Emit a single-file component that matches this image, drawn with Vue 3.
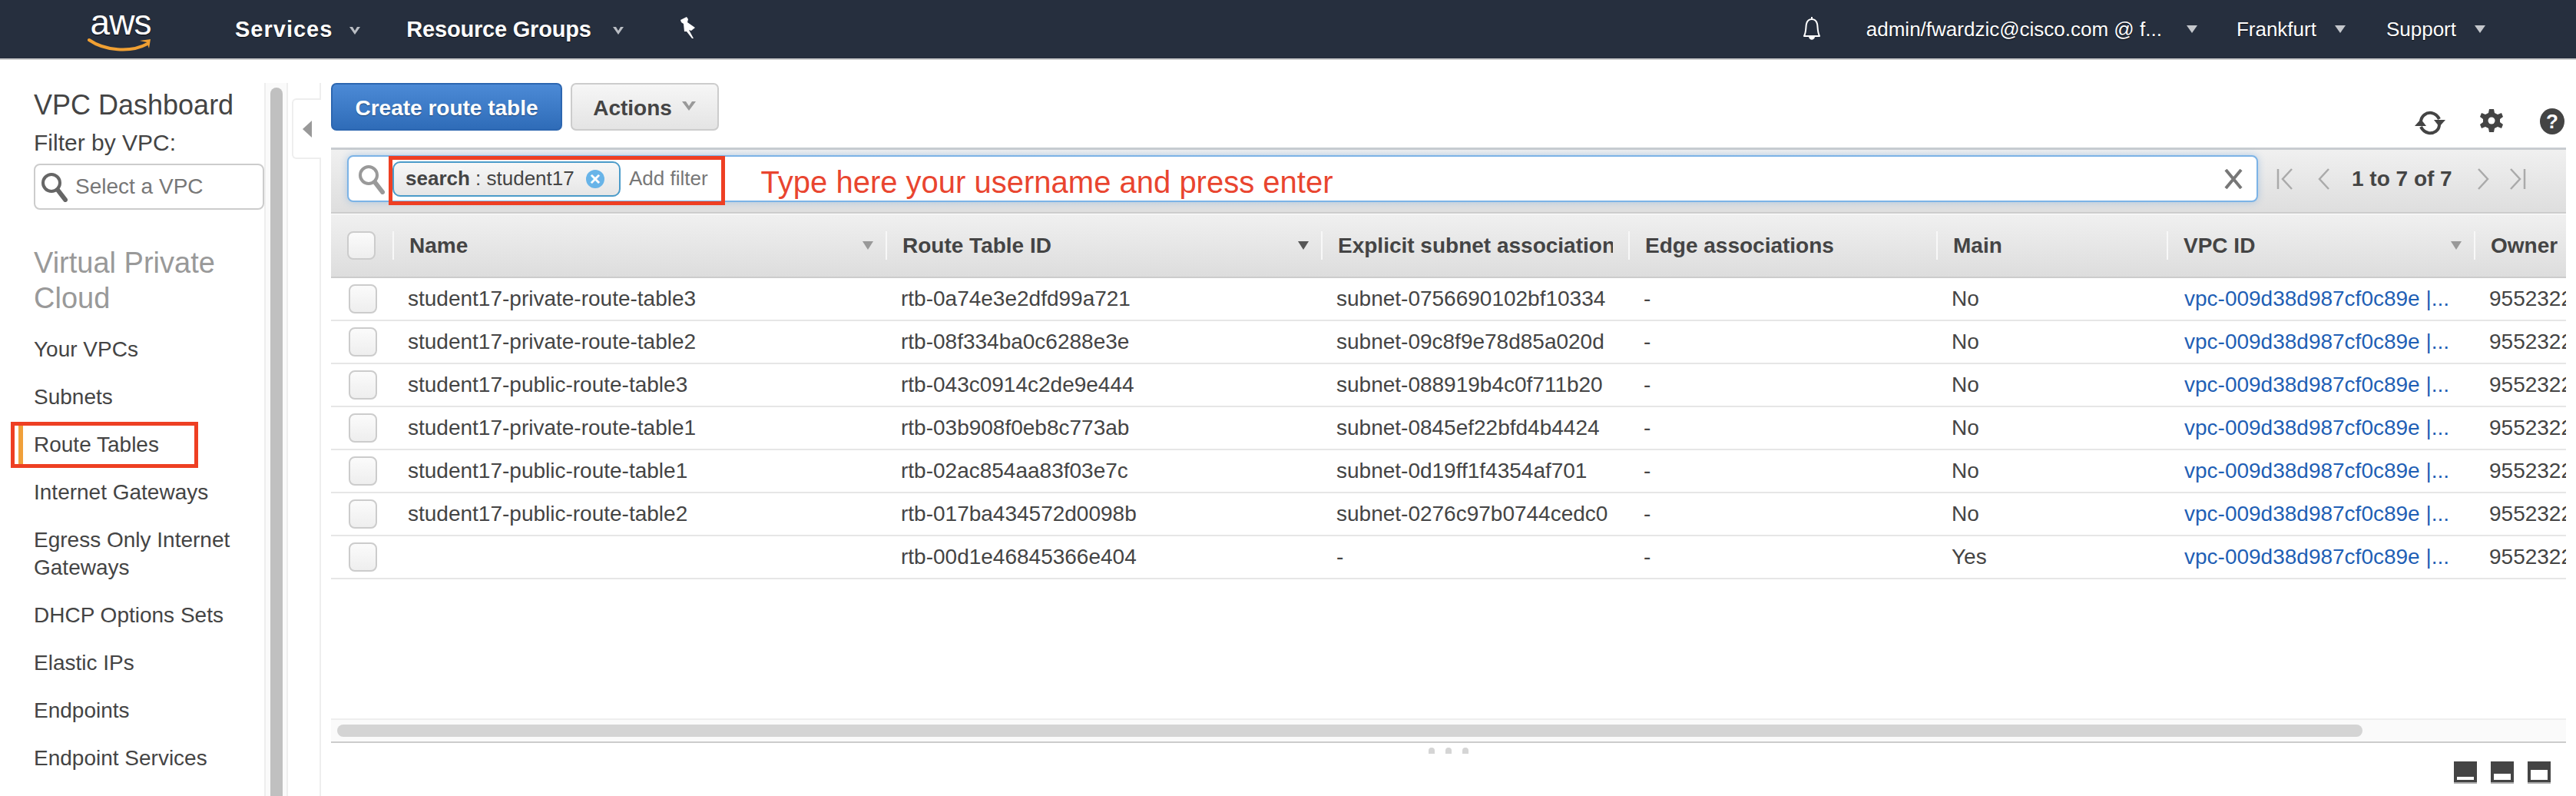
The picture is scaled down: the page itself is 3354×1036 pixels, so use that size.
<template>
  <div class="page">
    <header class="topnav">
      <div class="logo">
        <span class="logo-text">aws</span>
        <svg class="smile" width="86" height="20" viewBox="0 0 86 20">
          <path d="M2 3 C22 17 56 20 78 8" fill="none" stroke="#f0a033" stroke-width="4" stroke-linecap="round" />
          <path d="M68 4 L82 2 L80 14 L77 6 Z" fill="#f0a033" />
        </svg>
      </div>
      <span class="nav-main services">Services</span>
      <svg class="chev chev-first" width="18" height="12" viewBox="0 0 18 12"><path d="M2 1 L9 11 L16 1 L12 1 L9 6 L6 1 Z" fill="#b9bdc3" /></svg>
      <span class="nav-main groups">Resource Groups</span>
      <svg class="chev" width="18" height="12" viewBox="0 0 18 12"><path d="M2 1 L9 11 L16 1 L12 1 L9 6 L6 1 Z" fill="#b9bdc3" /></svg>
      <svg class="pin" width="26" height="30" viewBox="0 0 26 30">
        <path d="M3 5 L11 1 L13 4 L12 8 L22 15 L17 19 L14 18 L20 29 L18 29 L11 20 L8 20 L7 10 L4 8 Z" fill="#fff" />
      </svg>
      <div class="nav-right">
        <svg class="bell" width="32" height="34" viewBox="0 0 32 34">
          <path d="M16 1 L16 4 M6 26 C9 20 8 14 9 10 C10 6 13 4 16 4 C19 4 22 6 23 10 C24 14 23 20 26 26 Z" fill="none" stroke="#fff" stroke-width="2" stroke-linejoin="round" />
          <path d="M12 27 C13 32 19 32 20 27 Z" fill="#fff" />
        </svg>
        <span class="nav-sub user">admin/fwardzic@cisco.com @ f...</span>
        <span class="tri tri-user"></span>
        <span class="nav-sub region">Frankfurt</span>
        <span class="tri"></span>
        <span class="nav-sub support">Support</span>
        <span class="tri"></span>
      </div>
    </header>

    <div class="shell">
      <aside class="sidebar">
        <h2 class="dash">VPC Dashboard</h2>
        <div class="filter-label">Filter by VPC:</div>
        <div class="vpc-select">
          <svg width="36" height="40" viewBox="0 0 36 40">
            <circle cx="15" cy="15" r="11" fill="none" stroke="#666" stroke-width="4" />
            <path d="M23 24 L33 37" stroke="#666" stroke-width="6" stroke-linecap="round" />
          </svg>
          <span>Select a VPC</span>
        </div>
        <div class="section-title">Virtual Private Cloud</div>
        <nav class="side-links">
          <a v-for="item in sideLinks" :key="item" class="side-link">
            {{ item }}
            <template v-if="item === 'Route Tables'">
              <i class="active-bar"></i>
              <i class="side-mark"></i>
            </template>
          </a>
        </nav>
      </aside>

      <div class="side-scroll"><div class="side-thumb"></div></div>
      <div class="gutter">
        <div class="collapse-tab"><span class="collapse-arrow"></span></div>
      </div>

      <main class="content">
        <div class="toolbar">
          <button class="btn btn-primary">Create route table</button>
          <button class="btn btn-plain">
            Actions
            <svg width="20" height="14" viewBox="0 0 20 14"><path d="M1 1 L10 13 L19 1 L14 1 L10 7 L6 1 Z" fill="#999" /></svg>
          </button>
          <div class="tool-icons">
            <svg class="refresh" width="42" height="36" viewBox="0 0 42 36">
              <path d="M9 17 C9 9 16 4 23 5 C28 6 31 9 33 13" fill="none" stroke="#444" stroke-width="4" />
              <path d="M26 14 L41 14 L33 23 Z" fill="#444" />
              <path d="M33 20 C33 28 26 32 19 31 C14 30 11 27 9 23" fill="none" stroke="#444" stroke-width="4" />
              <path d="M1 22 L16 22 L9 13 Z" fill="#444" />
            </svg>
            <svg class="gear" width="32" height="32" viewBox="0 0 32 32">
              <path d="M13 1 H19 L20 6 L24 8 L29 6 L31 11 L27 14 V18 L31 21 L29 26 L24 24 L20 26 L19 31 H13 L12 26 L8 24 L3 26 L1 21 L5 18 V14 L1 11 L3 6 L8 8 L12 6 Z" fill="#444" />
              <circle cx="16" cy="16" r="4.5" fill="#fff" />
            </svg>
            <span class="help">?</span>
          </div>
        </div>

        <div class="filter-bar">
          <div class="search-box">
            <svg class="search-icon" width="36" height="40" viewBox="0 0 36 40">
              <circle cx="15" cy="15" r="11" fill="none" stroke="#999" stroke-width="4" />
              <path d="M23 24 L33 37" stroke="#999" stroke-width="6" stroke-linecap="round" />
            </svg>
            <div class="chip">
              <b>search</b><span class="chip-value">&nbsp;: student17</span>
              <span class="chip-x">×</span>
            </div>
            <span class="add-filter">Add filter</span>
            <span class="hint">Type here your username and press enter</span>
            <span class="clear">
              <svg width="24" height="26" viewBox="0 0 24 26"><path d="M2 1 L22 25 M22 1 L2 25" stroke="#777" stroke-width="4" /></svg>
            </span>
            <i class="filter-mark"></i>
          </div>
          <div class="pager">
            <svg width="24" height="28" viewBox="0 0 24 28"><path d="M2 1 V27 M20 1 L8 14 L20 27" fill="none" stroke="#aaa" stroke-width="2.5" /></svg>
            <svg class="pg-prev" width="16" height="28" viewBox="0 0 16 28"><path d="M14 1 L2 14 L14 27" fill="none" stroke="#aaa" stroke-width="2.5" /></svg>
            <span class="pg-text">1 to 7 of 7</span>
            <svg class="pg-next" width="16" height="28" viewBox="0 0 16 28"><path d="M2 1 L14 14 L2 27" fill="none" stroke="#aaa" stroke-width="2.5" /></svg>
            <svg width="24" height="28" viewBox="0 0 24 28"><path d="M22 1 V27 M4 1 L16 14 L4 27" fill="none" stroke="#aaa" stroke-width="2.5" /></svg>
          </div>
        </div>

        <div class="table-wrap">
          <table class="grid">
            <colgroup>
              <col v-for="w in colWidths" :key="w.id" :style="{ width: w.px + 'px' }" />
            </colgroup>
            <thead>
              <tr>
                <th class="check-cell"><span class="check head-check"></span></th>
                <th v-for="col in columns" :key="col.label">
                  <div class="th-inner">
                    <span class="th-label">{{ col.label }}</span>
                    <span v-if="col.sort" class="sort" :class="col.sort"></span>
                  </div>
                </th>
              </tr>
            </thead>
            <tbody>
              <tr v-for="row in rows" :key="row.id">
                <td class="check-cell"><span class="check"></span></td>
                <td>{{ row.name }}</td>
                <td>{{ row.id }}</td>
                <td>{{ row.subnet }}</td>
                <td>-</td>
                <td>{{ row.main }}</td>
                <td class="link">vpc-009d38d987cf0c89e |...</td>
                <td class="owner">955232244871</td>
              </tr>
            </tbody>
          </table>
        </div>

        <div class="hscroll"><div class="hthumb"></div></div>
        <div class="split-dots"><i></i><i></i><i></i></div>
        <div class="pane-icons">
          <span class="pane small"><i></i></span>
          <span class="pane medium"><i></i></span>
          <span class="pane large"><i></i></span>
        </div>
      </main>
    </div>
  </div>
</template>

<script setup>
const sideLinks = [
  'Your VPCs',
  'Subnets',
  'Route Tables',
  'Internet Gateways',
  'Egress Only Internet Gateways',
  'DHCP Options Sets',
  'Elastic IPs',
  'Endpoints',
  'Endpoint Services',
]

const colWidths = [
  { id: 'check', px: 80 },
  { id: 'name', px: 642 },
  { id: 'rtb', px: 567 },
  { id: 'subnet', px: 400 },
  { id: 'edge', px: 401 },
  { id: 'main', px: 300 },
  { id: 'vpc', px: 400 },
  { id: 'owner', px: 120 },
]

const columns = [
  { label: 'Name', sort: 'light' },
  { label: 'Route Table ID', sort: 'dark' },
  { label: 'Explicit subnet association' },
  { label: 'Edge associations' },
  { label: 'Main' },
  { label: 'VPC ID', sort: 'light' },
  { label: 'Owner' },
]

const rows = [
  { name: 'student17-private-route-table3', id: 'rtb-0a74e3e2dfd99a721', subnet: 'subnet-0756690102bf10334', main: 'No' },
  { name: 'student17-private-route-table2', id: 'rtb-08f334ba0c6288e3e', subnet: 'subnet-09c8f9e78d85a020d', main: 'No' },
  { name: 'student17-public-route-table3', id: 'rtb-043c0914c2de9e444', subnet: 'subnet-088919b4c0f711b20', main: 'No' },
  { name: 'student17-private-route-table1', id: 'rtb-03b908f0eb8c773ab', subnet: 'subnet-0845ef22bfd4b4424', main: 'No' },
  { name: 'student17-public-route-table1', id: 'rtb-02ac854aa83f03e7c', subnet: 'subnet-0d19ff1f4354af701', main: 'No' },
  { name: 'student17-public-route-table2', id: 'rtb-017ba434572d0098b', subnet: 'subnet-0276c97b0744cedc0', main: 'No' },
  { name: '', id: 'rtb-00d1e46845366e404', subnet: '-', main: 'Yes' },
]
</script>

<style>
html, body { margin: 0; background: #fff; overflow: hidden; }
</style>

<style scoped>
.page { width: 3354px; height: 1036px; overflow: hidden; display: flex; flex-direction: column; font-family: "Liberation Sans", Arial, sans-serif; color: #444; background: #fff; }

.topnav { flex: none; height: 76px; border-bottom: 2px solid #ccc; background: #262f3e; display: flex; align-items: center; color: #fff; text-shadow: 0 1px 1px rgba(0,0,0,.7); }
.logo { width: 86px; margin-left: 114px; height: 60px; position: relative; }
.logo-text { display: block; font-size: 46px; line-height: 42px; letter-spacing: -1px; text-align: center; }
.smile { display: block; margin-top: -1px; }
.nav-main { font-size: 29px; font-weight: 700; }
.services { margin-left: 106px; letter-spacing: 1px; }
.groups { margin-left: 58px; letter-spacing: -0.2px; }
.chev { margin-left: 26px; margin-top: 4px; }
.chev-first { margin-left: 20px; }
.pin { margin-left: 69px; margin-top: -4px; }
.nav-right { margin-left: auto; display: flex; align-items: center; padding-right: 118px; }
.bell { margin-right: 55px; }
.nav-sub { font-size: 26px; }
.tri { width: 0; height: 0; border-left: 7px solid transparent; border-right: 7px solid transparent; border-top: 10px solid #c4c7cc; margin-left: 24px; }
.tri-user { margin-left: 32px; }
.region { margin-left: 51px; }
.support { margin-left: 53px; }

.shell { flex: 1; min-height: 0; display: flex; padding-top: 30px; }
.sidebar { width: 344px; flex: none; box-sizing: border-box; padding-left: 44px; overflow: hidden; }
.dash { margin: 6px 0 0; font-size: 36px; font-weight: 400; line-height: 46px; }
.filter-label { font-size: 30px; line-height: 36px; margin-top: 8px; }
.vpc-select { box-sizing: border-box; margin-top: 9px; width: 300px; height: 60px; border: 2px solid #ccc; border-radius: 8px; display: flex; align-items: center; gap: 10px; padding-left: 6px; color: #777; font-size: 28px; }
.section-title { width: 250px; margin-top: 46px; color: #999; font-size: 38px; line-height: 46px; }
.side-links { margin-left: -44px; margin-top: 13px; }
.side-link { display: block; position: relative; padding: 13px 0 13px 44px; font-size: 28px; line-height: 36px; color: #444; width: 260px; }
.active-bar { position: absolute; left: 24px; top: 6px; width: 6px; height: 50px; background: #f0a03a; }
.side-mark { position: absolute; left: 14px; top: 1px; width: 244px; height: 60px; box-sizing: border-box; border: 5px solid #ee3f23; }

.side-scroll { width: 27px; flex: none; border-left: 2px solid #eee; border-right: 2px solid #eee; background: #fafafa; position: relative; }
.side-thumb { position: absolute; left: 6px; top: 6px; width: 16px; bottom: 0; border-radius: 8px 8px 0 0; background: #c0c0c0; }
.gutter { width: 41px; flex: none; border-right: 2px solid #eee; position: relative; }
.collapse-tab { position: absolute; left: 5px; top: 20px; width: 38px; height: 79px; box-sizing: border-box; background: #fff; border: 2px solid #eee; border-right: none; border-radius: 6px 0 0 6px; display: flex; align-items: center; padding-left: 12px; }
.collapse-arrow { width: 0; height: 0; border-top: 11px solid transparent; border-bottom: 11px solid transparent; border-right: 12px solid #999; }

.content { margin-left: 13px; width: 2910px; flex: none; display: flex; flex-direction: column; }
.toolbar { height: 84px; display: flex; align-items: flex-start; gap: 11px; }
.btn { height: 62px; font-family: inherit; font-size: 28px; font-weight: 700; border-radius: 7px; padding: 3px 0 0; box-sizing: border-box; }
.btn-primary { width: 301px; color: #fff; border: 2px solid #2c66b0; background: linear-gradient(#4c8ad6, #2f6cb8); text-shadow: 0 1px 1px rgba(0,0,0,.4); }
.btn-plain { width: 193px; color: #444; border: 2px solid #ccc; background: linear-gradient(#f6f6f6, #e4e4e4); display: flex; align-items: center; justify-content: center; gap: 12px; }
.btn-plain svg { margin-top: -6px; }
.tool-icons { margin-left: auto; display: flex; align-items: center; padding: 30px 2px 0 0; }
.refresh { margin-top: 4px; }
.gear { margin-left: 43px; margin-top: -2px; }
.help { margin-left: 47px; width: 32px; height: 34px; border-radius: 50%; background: #444; color: #fff; font-size: 26px; font-weight: 700; line-height: 34px; text-align: center; }

.filter-bar { height: 86px; box-sizing: border-box; border-top: 3px solid #c8ccd0; border-bottom: 2px solid #ccc; background: linear-gradient(#f0f0f0, #dedede); display: flex; padding: 7px 0 0 21px; margin-bottom: 1px; }
.search-box { position: relative; box-sizing: border-box; width: 2488px; height: 61px; background: #fff; border: 2px solid #7cb3e6; border-radius: 8px; box-shadow: 0 0 10px rgba(100,160,220,.45); display: flex; align-items: center; }
.search-icon { margin-left: 11px; flex: none; }
.chip { box-sizing: border-box; margin-left: 10px; width: 297px; height: 46px; border: 2px solid #4b9bc9; border-radius: 10px; background: linear-gradient(#f7f7f7, #e6e6e6); display: flex; align-items: center; padding-left: 15px; font-size: 26px; color: #444; white-space: nowrap; }
.chip-x { width: 24px; height: 24px; margin-left: 15px; border-radius: 50%; background: #68b4e8; color: #fff; font-size: 24px; font-weight: 700; line-height: 23px; text-align: center; }
.add-filter { margin-left: 11px; font-size: 26px; color: #777; }
.hint { margin-left: 69px; margin-top: 9px; font-size: 40px; color: #e9452f; white-space: nowrap; }
.clear { margin-left: auto; margin-right: 18px; display: flex; }
.filter-mark { position: absolute; left: 52px; top: -1px; width: 438px; height: 64px; box-sizing: border-box; border: 5px solid #ee3f23; }
.pager { display: flex; align-items: center; height: 61px; margin-left: 24px; font-size: 28px; font-weight: 700; color: #444; white-space: nowrap; }
.pg-prev { margin-left: 30px; }
.pg-text { margin: 0 32px 0 28px; }
.pg-next { margin-right: 24px; }

.table-wrap { height: 656px; overflow: hidden; }
.grid { border-collapse: collapse; table-layout: fixed; width: 2910px; font-size: 28px; }
.grid th { height: 82px; padding: 22px 0 0; vertical-align: top; text-align: left; font-weight: 700; background: linear-gradient(#f0f0f0, #dddddd); border-bottom: 2px solid #ccc; box-sizing: border-box; }
.th-inner { height: 37px; border-left: 2px solid #f8f8f8; display: flex; align-items: center; justify-content: space-between; padding: 0 20px; overflow: hidden; white-space: nowrap; }
.grid th:last-child .th-inner { padding-right: 0; }
.th-label { overflow: hidden; }
.sort { flex: none; width: 0; height: 0; margin-right: -4px; border-left: 7px solid transparent; border-right: 7px solid transparent; border-top: 11px solid #999; }
.sort.dark { border-top-color: #555; }
.grid td { height: 56px; padding: 0 10px 0 20px; box-sizing: border-box; border-bottom: 2px solid #e6e6e6; white-space: nowrap; overflow: hidden; }
.grid .check-cell { padding: 0 0 0 21px; }
.grid th.check-cell { padding: 22px 0 0 21px; }
.check { display: block; box-sizing: border-box; margin-left: 2px; width: 37px; height: 38px; border: 2px solid #ccc; border-radius: 8px; background: linear-gradient(#fbfbfb, #eeeeee); }
.head-check { margin-left: 0; height: 37px; }
.grid .link { color: #1f5fb5; padding-left: 23px; }
.grid .owner { padding-right: 0; }

.hscroll { box-sizing: border-box; height: 32px; margin-top: 0; border-top: 2px solid #eee; border-bottom: 2px solid #ccc; background: #fafafa; padding: 6px 0 0 8px; }
.hthumb { width: 2637px; height: 16px; border-radius: 8px; background: #d4d4d4; }
.split-dots { display: flex; gap: 14px; justify-content: center; height: 8px; margin-top: 6px; }
.split-dots i { width: 8px; height: 8px; border-radius: 4px 4px 0 0; background: #d5d5d5; }
.pane-icons { display: flex; justify-content: flex-end; gap: 18px; margin-top: 10px; padding-right: 20px; }
.pane { width: 30px; height: 29px; box-sizing: border-box; background: #444; border-bottom: 2px solid #aaa; display: flex; align-items: flex-end; justify-content: center; padding-bottom: 3px; }
.pane i { display: block; width: 22px; background: #fff; }
.pane.small i { height: 4px; }
.pane.medium i { height: 8px; }
.pane.large i { height: 13px; }
</style>
